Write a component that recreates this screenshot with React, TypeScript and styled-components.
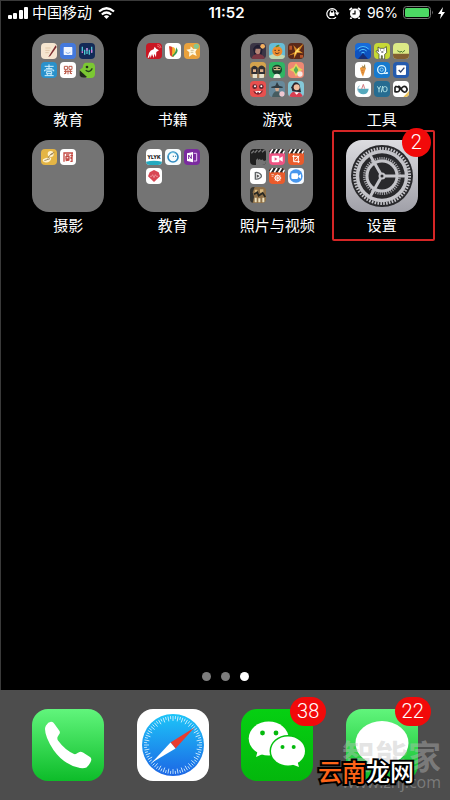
import React from "react";
import styled, { createGlobalStyle } from "styled-components";

const GlobalStyle = createGlobalStyle`
  * { box-sizing: border-box; }
  body {
    margin: 0;
    background: #000;
    color: #fff;
    font-family: Inter, "Noto Sans CJK SC", sans-serif;
  }
  button {
    border: 0;
    padding: 0;
    background: none;
    color: inherit;
    font: inherit;
    cursor: pointer;
  }
  svg { display: block; }
`;

const Screen = styled.div`
  position: relative;
  min-height: 100vh;
  display: flex;
  flex-direction: column;
  overflow: hidden;
  background: #000;
  box-shadow: inset 1px 1px 0 #3a3a3a;
`;

const StatusBar = styled.header`
  display: grid;
  grid-template-columns: 1fr auto 1fr;
  align-items: center;
  height: 25px;
  padding: 0 5px 0 8px;
`;

const StatusGroup = styled.div<{ $end?: boolean; $gap: number }>`
  display: flex;
  align-items: center;
  justify-content: ${(p) => (p.$end ? "flex-end" : "flex-start")};
  gap: ${(p) => p.$gap}px;
`;

const Carrier = styled.span`
  font-size: 15px;
  line-height: 24px;
  margin-right: 2px;
`;

const Clock = styled.time`
  font-size: 15px;
  font-weight: 600;
  line-height: 24px;
`;

const Percent = styled.span`
  font-size: 14px;
  line-height: 24px;
`;

const AppGrid = styled.main`
  flex: 1;
  display: grid;
  grid-template-columns: repeat(4, 1fr);
  grid-auto-rows: 106px;
  align-items: start;
  padding: 9px 16px 0;
`;

const AppButton = styled.button`
  position: relative;
  display: flex;
  flex-direction: column;
  align-items: center;
  justify-content: flex-start;
  width: 100%;
`;

const IconBox = styled.span`
  position: relative;
  display: block;
  width: 72px;
  height: 72px;
`;

const FolderBox = styled.span`
  display: grid;
  grid-template-columns: repeat(3, 16px);
  grid-auto-rows: 16px;
  align-content: start;
  gap: 3px;
  width: 72px;
  height: 72px;
  padding: 9px;
  border-radius: 17px;
  background: #747474;
`;

const MiniIcon = styled.svg`
  width: 16px;
  height: 16px;
  border-radius: 4px;
`;

const Label = styled.span`
  margin-top: 3px;
  font-size: 15px;
  line-height: 22px;
  white-space: nowrap;
`;

const Badge = styled.span`
  position: absolute;
  top: -12px;
  right: -13px;
  min-width: 29px;
  height: 29px;
  padding: 0 7px;
  border-radius: 15px;
  background: #f20a0a;
  font-family: Roboto, sans-serif;
  font-size: 20px;
  font-weight: 300;
  line-height: 29px;
  text-align: center;
`;

const Highlight = styled.span`
  position: absolute;
  inset: -10px -1px -4px 2px;
  border: 2px solid #d62626;
  border-radius: 2px;
  pointer-events: none;
`;

const Pager = styled.nav`
  display: flex;
  justify-content: center;
  gap: 10px;
  padding-bottom: 9px;
`;

const Dot = styled.button<{ $active?: boolean }>`
  width: 9px;
  height: 9px;
  border-radius: 50%;
  background: ${(p) => (p.$active ? "#fff" : "#7d7d7d")};
`;

const Dock = styled.footer`
  display: grid;
  grid-template-columns: repeat(4, 1fr);
  padding: 19px 16px;
  background: #4d4d4d;
`;

const SiteMark = styled.div`
  position: absolute;
  right: 9px;
  bottom: 9px;
  color: rgba(190, 190, 190, 0.42);
  text-align: center;
  pointer-events: none;
`;

const SiteName = styled.div`
  font-size: 33px;
  font-weight: 700;
  line-height: 32px;
`;

const SiteUrl = styled.div`
  font-family: "Open Sans", sans-serif;
  font-size: 16px;
  line-height: 18px;
`;

const Caption = styled.div`
  position: absolute;
  right: 36px;
  bottom: 9px;
  font-size: 24px;
  font-weight: 500;
  line-height: 36px;
  color: #fff;
  -webkit-text-stroke: 4px #000;
  paint-order: stroke fill;
  pointer-events: none;
`;

const CaptionAccent = styled.span`
  color: #ff6418;
`;

const minis: Record<string, React.ReactNode> = {
  pen: (
    <>
      <rect width="48" height="48" fill="#f6e6d0" />
      <path d="M13 15h16M13 22h13M13 29h10" stroke="#e0c8a8" strokeWidth="3" />
      <path d="M44 7 25 37l-3 5 6-3L47 12z" fill="#7c2d30" />
    </>
  ),
  note: (
    <>
      <rect width="48" height="48" fill="#4378dc" />
      <rect x="11" y="12" width="26" height="24" rx="2" fill="#eef4ff" />
      <path d="M17 28q7 7 14 0" fill="none" stroke="#88aef0" strokeWidth="3" />
    </>
  ),
  wave: (
    <>
      <rect width="48" height="48" fill="#132a57" />
      <path d="M10 11v14M17 20v15M24 15v18M31 20v15M38 11v18" stroke="#4ec7d3" strokeWidth="4" />
      <path d="M10 25v5M24 15v8M38 20v9" stroke="#da75d6" strokeWidth="4" />
    </>
  ),
  yi: (
    <>
      <rect width="48" height="48" fill="#2a91cb" />
      <path d="M11 13h27M24 7v13M15 20h19M11 28v-4h27v4M17 29h15v6H17zM18 36l2 4M31 36l-2 4M11 41h27" fill="none" stroke="#d4f2ff" strokeWidth="3" />
    </>
  ),
  grid: (
    <>
      <rect width="48" height="48" fill="#fff" />
      <path d="M13 13h10v9H13zM27 13h9v9h-9zM12 28h25M17 23v13M31 23v13M24 25v12M12 36l7-5M36 36l-6-5" fill="none" stroke="#ba5746" strokeWidth="3" />
    </>
  ),
  frog: (
    <>
      <path d="M20 2h17q11 0 11 12v24q0 10-10 10H23L3 32q-5-10 8-15 1-13 9-15z" fill="#7bc832" />
      <path d="M2 25 24 45q-15 5-22-4z" fill="#20291d" />
      <circle cx="24" cy="15" r="4" fill="#202c18" />
      <path d="M20 25q12 9 20-6" fill="none" stroke="#23411b" strokeWidth="4" />
    </>
  ),
  wolf: (
    <>
      <rect width="48" height="48" fill="#c91723" />
      <path d="M5 44 9 30q4-9 14-11l3-8 5 6 8 5-8 5-1 16-5-11-2 13-5-12-4 12-2-9-3 8z" fill="#fff" />
      <path d="M33 9q7 0 8 7M34 4q10 0 11 11" fill="none" stroke="#ff9293" strokeWidth="2" />
    </>
  ),
  leaf: (
    <>
      <rect width="48" height="48" fill="#fff" />
      <path d="M12 10q18-5 14 31-8 2-11-5z" fill="#df432e" />
      <path d="M22 11q16 4 5 29-7 3-6-5z" fill="#f2b62e" />
      <path d="M33 13q13 14-10 29l-1-5q12-9 11-24z" fill="#379b50" />
    </>
  ),
  star: (
    <>
      <rect width="48" height="48" fill="#e9a23d" />
      <path d="m20 10 8 8 12-2-6 11 4 12-12-5-11 7 1-13-9-8 12-2z" fill="#fff8df" />
      <circle cx="37" cy="10" r="8" fill="#87c68f" />
      <path d="M20 22h9M20 28h8" stroke="#b6a16e" strokeWidth="2" />
    </>
  ),
  hero: (
    <>
      <rect width="48" height="48" fill="#3b3545" />
      <path d="M9 18Q22-7 38 17l-4 20H14z" fill="#211d31" />
      <path d="M17 17h15l-2 14-7 5-8-8z" fill="#b48475" />
      <path d="M4 48q4-15 20-15t22 15z" fill="#7a3843" />
      <circle cx="38" cy="10" r="7" fill="#f5b05e" />
    </>
  ),
  orange: (
    <>
      <rect width="48" height="48" fill="#65bdd8" />
      <path d="M0 38q20-11 48 0v10H0z" fill="#c5d9af" />
      <circle cx="25" cy="25" r="15" fill="#ee8d2e" />
      <path d="M19 12q5-8 13-6-2 8-13 6" fill="#56862f" />
      <path d="M16 22h5M27 22h5M18 29q6 7 13 0" stroke="#613b25" strokeWidth="3" fill="none" />
    </>
  ),
  fire: (
    <>
      <rect width="48" height="48" fill="#5c2919" />
      <path d="m0 38 22-12L16 6l11 12L48 1 34 23l12 8-18-2-11 19 2-15z" fill="#d98a25" />
      <path d="m22 25 12-12-3 11 8 3-13 1-8 13z" fill="#ffe069" />
      <path d="M4 8h8v12H4zM36 36h9v8h-9z" fill="#b7542a" />
    </>
  ),
  crew: (
    <>
      <rect width="48" height="48" fill="#9d7951" />
      <path d="M0 0h48v17H0z" fill="#d4a34d" />
      <path d="M4 17q9-12 19 0v19H4zM25 17q9-13 20 0v19H25z" fill="#302e32" />
      <path d="M9 22h9v8H9zM30 22h10v8H30z" fill="#dfb18b" />
      <path d="M8 48V36h13v12M28 48V36h14v12" fill="#e8e2ce" />
    </>
  ),
  ninja: (
    <>
      <rect width="48" height="48" fill="#2fb563" />
      <circle cx="24" cy="23" r="15" fill="#193f2b" />
      <path d="M12 17q12-7 24 0l-3 8H15z" fill="#e0bb8c" />
      <path d="M14 19h8M26 19h8" stroke="#17271e" strokeWidth="4" />
      <path d="M13 48q1-13 11-13t11 13z" fill="#e8eee1" />
    </>
  ),
  gem: (
    <>
      <rect width="48" height="48" fill="#ed8873" />
      <path d="m24 4 8 12 12 7-12 7-8 14-7-14-13-7 13-7z" fill="#e4d65c" />
      <path d="m24 12 7 12-7 12-7-12z" fill="#55af58" />
      <circle cx="36" cy="36" r="8" fill="#f7e8e3" />
    </>
  ),
  monster: (
    <>
      <rect width="48" height="48" fill="#e8504e" />
      <circle cx="14" cy="17" r="7" fill="#5c2730" />
      <circle cx="34" cy="17" r="7" fill="#5c2730" />
      <circle cx="15" cy="16" r="3" fill="#fff" />
      <circle cx="34" cy="16" r="3" fill="#fff" />
      <path d="M10 29q14 8 29-1-4 13-15 13Q12 40 10 29" fill="#7d2430" />
      <path d="m15 31 5 6 4-5 5 5 5-7z" fill="#fff" />
    </>
  ),
  wizard: (
    <>
      <rect width="48" height="48" fill="#68899b" />
      <path d="m7 17 12-3 5-11 6 11 11 3v4H7z" fill="#303b42" />
      <path d="M18 21h13l-3 12h-7z" fill="#d5aa8e" />
      <path d="M9 48q3-17 15-17t15 17z" fill="#465c60" />
      <circle cx="39" cy="39" r="8" fill="#f0c8d1" />
    </>
  ),
  girl: (
    <>
      <rect width="48" height="48" fill="#84c8d8" />
      <path d="M10 19Q20-7 35 11l4 23-26-3z" fill="#2b242c" />
      <circle cx="26" cy="19" r="9" fill="#f0bd9f" />
      <path d="M3 48q8-21 23-14 15-1 19 14z" fill="#d93e50" />
      <path d="m19 34 7 7 7-7" fill="#fff" />
    </>
  ),
  signal: (
    <>
      <rect width="48" height="48" fill="#176bda" />
      <path d="M0 25 24 8l24 17v23H0z" fill="#0e52bf" />
      <path d="M7 18q17-15 34 0M13 24q11-10 22 0M19 30q5-5 10 0" fill="none" stroke="#52c5ff" strokeWidth="3" />
      <path d="m9 48 15-17 15 17z" fill="#172d75" />
    </>
  ),
  bear: (
    <>
      <rect width="48" height="48" fill="#c7d936" />
      <path d="m12 12 6 4h12l7-5 1 18-6 5v14h-7V38h-3v10h-7V34l-9-9 4-3 3 4z" fill="#fff" stroke="#252e22" strokeWidth="2" />
      <path d="M19 21h2M29 21h2M22 27h6" stroke="#222" strokeWidth="3" />
    </>
  ),
  grass: (
    <>
      <rect width="48" height="48" fill="#dcea86" />
      <path d="M0 32h48v16H0z" fill="#825f31" />
      <path d="m13 23 9 5 2-4 4 4 8-6" fill="none" stroke="#4d7a2e" strokeWidth="3" />
    </>
  ),
  carrot: (
    <>
      <rect width="48" height="48" fill="#fff" />
      <path d="M15 18q9-9 18 0l-9 26q-6-8-9-26" fill="#e99840" />
      <path d="m23 18-3-10 5 6 5-8 1 11" fill="#9f854c" />
      <path d="M19 26h6M21 32h5" stroke="#c46d28" strokeWidth="2" />
    </>
  ),
  search: (
    <>
      <rect width="48" height="48" fill="#1679cd" />
      <circle cx="23" cy="23" r="12" fill="none" stroke="#d8f5ff" strokeWidth="4" />
      <circle cx="23" cy="23" r="5" fill="none" stroke="#8fd2f5" strokeWidth="3" />
      <path d="M29 34h9" stroke="#d8f5ff" strokeWidth="4" />
      <circle cx="39" cy="33" r="3" fill="#fff" />
    </>
  ),
  check: (
    <>
      <rect width="48" height="48" fill="#255bae" />
      <rect x="10" y="10" width="29" height="29" rx="3" fill="#fff" />
      <path d="m17 24 6 6 11-13" fill="none" stroke="#30436d" strokeWidth="4" />
    </>
  ),
  bowl: (
    <>
      <rect width="48" height="48" fill="#fff" />
      <path d="M8 23h33q-2 17-16 17T8 23" fill="#55a9bd" />
      <path d="m20 24 5-14 4 13" fill="none" stroke="#d37b82" strokeWidth="3" />
      <path d="M13 14q-10 12 1 22" fill="none" stroke="#89b8ca" strokeWidth="3" />
    </>
  ),
  yo: (
    <>
      <rect width="48" height="48" fill="#266c91" />
      <path d="m10 16 5 8 5-9M15 24v10M26 15l-4 19" fill="none" stroke="#b2e4e7" strokeWidth="3" />
      <rect x="27" y="17" width="12" height="15" rx="5" fill="none" stroke="#b2e4e7" strokeWidth="3" />
    </>
  ),
  loop: (
    <>
      <rect width="48" height="48" fill="#fff" />
      <path d="M48 30v18H31z" fill="#edc45a" />
      <path d="M6 17v15q14 3 14-7T6 17M24 24q8-12 15-6 7 7 0 14-7 5-15-8t-6-6" fill="none" stroke="#202020" strokeWidth="5" />
    </>
  ),
  swan: (
    <>
      <rect width="48" height="48" fill="#e4b545" />
      <circle cx="29" cy="15" r="9" fill="#fff3cf" />
      <path d="M6 31q11-8 25-5-2 16-20 14-8-3-5-9" fill="#fff3cf" />
      <path d="M20 28Q29 12 40 10M10 35l17-6M29 17l7-3" fill="none" stroke="#775d34" strokeWidth="2" />
    </>
  ),
  kitchen: (
    <>
      <rect width="48" height="48" fill="#fff" />
      <path d="M12 38V12h27M18 18h10M18 23h9v7h-9zM17 35l11-2M31 20h8M36 14v23h-5M32 25l2 5" fill="none" stroke="#c34a43" strokeWidth="4" />
    </>
  ),
  ylyk: (
    <>
      <rect width="48" height="48" fill="#fff" />
      <text x="24" y="29" textAnchor="middle" fontFamily="Inter" fontWeight="800" fontSize="15" fill="#111">YLYK</text>
      <path d="M0 38q24-6 48 0v10H0z" fill="#24a9bf" />
    </>
  ),
  ring: (
    <>
      <rect width="48" height="48" fill="#f7fbfc" />
      <circle cx="24" cy="24" r="15" fill="none" stroke="#328bc0" strokeWidth="5" />
      <path d="M11 19q7-13 21-6" fill="none" stroke="#82cde4" strokeWidth="3" />
      <path d="M25 20v4M32 20v4" stroke="#277ba9" strokeWidth="3" />
    </>
  ),
  onenote: (
    <>
      <rect width="48" height="48" fill="#7b2b9f" />
      <path d="m9 13 18-4v31L9 36z" fill="#fff" />
      <path d="M29 13h9v23h-9" fill="none" stroke="#e9c8f6" strokeWidth="3" />
      <path d="M14 30V18l8 11V17" fill="none" stroke="#7b2b9f" strokeWidth="3" />
    </>
  ),
  redgem: (
    <>
      <rect width="48" height="48" fill="#fff" />
      <path d="m24 6 14 7 4 12-18 17L6 25l5-12z" fill="#d84754" />
      <path d="M12 25h5l3-5 4 9 4-9 3 5h5" fill="none" stroke="#f5a8ad" strokeWidth="2" />
    </>
  ),
  clapdark: (
    <>
      <rect width="48" height="48" fill="#202020" />
      <path d="m4 13 8-8M14 11l8-8M25 10l8-8M36 10l8-8" stroke="#777" strokeWidth="4" />
      <path d="M18 48V34l4-6 4 5 3-4 4 5 4-3 5 5 6-2v14z" fill="#747474" />
    </>
  ),
  clappink: (
    <>
      <rect width="48" height="48" fill="#ee5383" />
      <path d="M0 0h48v13H0z" fill="#222" />
      <path d="m3 13 8-13M16 13l8-13M29 13l8-13M42 13l8-13" stroke="#fff" strokeWidth="5" />
      <rect x="8" y="20" width="23" height="20" rx="4" fill="#fff" />
      <path d="m31 28 10-6v16l-10-6z" fill="#fff" />
      <path d="m17 25 8 5-8 5z" fill="#ee5383" />
    </>
  ),
  clapcrop: (
    <>
      <rect width="48" height="48" fill="#e95b2c" />
      <path d="M0 0h48v13H0z" fill="#222" />
      <path d="m3 13 8-13M16 13l8-13M29 13l8-13M42 13l8-13" stroke="#fff" strokeWidth="5" />
      <path d="M17 18v20h18M13 22h18v20M20 35l14-15" fill="none" stroke="#fff" strokeWidth="3" />
    </>
  ),
  play: (
    <>
      <rect width="48" height="48" fill="#fff" />
      <path d="M16 14q8-2 15 4 7 7-1 12-7 5-14 3z" fill="none" stroke="#626668" strokeWidth="4" />
      <path d="m20 19 9 5-9 6z" fill="#555" />
    </>
  ),
  clapflower: (
    <>
      <rect width="48" height="48" fill="#e95b2c" />
      <path d="M0 0h48v13H0z" fill="#222" />
      <path d="m3 13 8-13M16 13l8-13M29 13l8-13M42 13l8-13" stroke="#fff" strokeWidth="5" />
      <circle cx="26" cy="30" r="8" fill="none" stroke="#fff" strokeWidth="3" />
      <path d="M26 19v22M15 30h22M18 22l16 16M34 22 18 38M7 20h8M8 25h5" stroke="#fff" strokeWidth="2" />
    </>
  ),
  camera: (
    <>
      <rect width="48" height="48" fill="#f6faff" />
      <circle cx="24" cy="24" r="20" fill="#4796ed" />
      <rect x="10" y="16" width="20" height="17" rx="4" fill="#fff" />
      <path d="m31 23 8-5v14l-8-5z" fill="#fff" />
    </>
  ),
  warriors: (
    <>
      <rect width="48" height="48" fill="#8e7048" />
      <path d="M0 0h14L8 16l4 14-4 18H0z" fill="#343532" />
      <path d="M14 8h8v10h-8zM30 7h10v10H30z" fill="#d7b87e" />
      <path d="M12 22 22 16l4 10 12-8 8 12" fill="none" stroke="#282822" strokeWidth="5" />
      <path d="M14 32h6v14h-6zM25 34h6v12h-6zM37 32h6v14h-6z" fill="#eee2bd" />
    </>
  ),
};

const SettingsIcon = () => (
  <svg width="72" height="72" viewBox="0 0 72 72" aria-hidden="true">
    <defs>
      <linearGradient id="settingsBg" x1="0" y1="0" x2="0" y2="1">
        <stop offset="0" stopColor="#dcdce0" />
        <stop offset="1" stopColor="#a0a0a8" />
      </linearGradient>
    </defs>
    <rect width="72" height="72" rx="16" fill="url(#settingsBg)" />
    <circle cx="36" cy="36" r="31" fill="#29292c" />
    <circle cx="36" cy="36" r="27.5" fill="none" stroke="#c4c4c9" strokeWidth="3" strokeDasharray="1.6 1.28" />
    <circle cx="36" cy="36" r="24.5" fill="none" stroke="#c4c4c9" strokeWidth="3.5" />
    <circle cx="36" cy="36" r="17.5" fill="none" stroke="#a4a4a9" strokeWidth="3" strokeDasharray="1.1 1.1" />
    <circle cx="36" cy="36" r="15" fill="none" stroke="#c4c4c9" strokeWidth="3" />
    <g fill="none" stroke="#c4c4c9" strokeWidth="3">
      <path d="M39 36h20" />
      <path d="M39 36h20" transform="rotate(120 36 36)" />
      <path d="M39 36h20" transform="rotate(240 36 36)" />
    </g>
    <circle cx="36" cy="36" r="3.5" fill="#c4c4c9" />
    <circle cx="36" cy="36" r="1.5" fill="#29292c" />
  </svg>
);

const GreenDefs = ({ id }: { id: string }) => (
  <defs>
    <linearGradient id={id} x1="0" y1="0" x2="0" y2="1">
      <stop offset="0" stopColor="#61f57c" />
      <stop offset="1" stopColor="#0dbc29" />
    </linearGradient>
  </defs>
);

const PhoneIcon = () => (
  <svg width="72" height="72" viewBox="0 0 72 72" aria-hidden="true">
    <GreenDefs id="phoneBg" />
    <rect width="72" height="72" rx="16" fill="url(#phoneBg)" />
    <path
      d="M14 16.5Q16 13 19 12.7Q21 12.5 22.5 15L27.5 22Q28.5 24 27 25.5L25.5 28Q25 30 26 31.5Q33 41 42 45Q44 45.5 45.500 44L47.500 43Q49 42.500 51 43.500L58 48Q60 49.500 59 52Q57.500 56 54.500 58.500Q52 59.500 48 59Q32 56 21.500 41Q13 28 13 20Q13 18 14 16.500Z"
      fill="#fff"
    />
  </svg>
);

const SafariIcon = () => (
  <svg width="72" height="72" viewBox="0 0 72 72" aria-hidden="true">
    <defs>
      <linearGradient id="safariBg" x1="0" y1="0" x2="0" y2="1">
        <stop offset="0" stopColor="#1dc5f8" />
        <stop offset="1" stopColor="#1c66e5" />
      </linearGradient>
    </defs>
    <rect width="72" height="72" rx="16" fill="#fff" />
    <circle cx="36" cy="36" r="31" fill="url(#safariBg)" />
    <g stroke="#d8f2ff" strokeWidth="0.8">
      {Array.from({ length: 72 }, (_, i) => (
        <path key={i} d={i % 2 ? "M36 7v3" : "M36 7v5"} transform={`rotate(${i * 5} 36 36)`} />
      ))}
    </g>
    <path d="M57.5 18.5 38.5 39.5 33.5 33.5z" fill="#e83c30" />
    <path d="M15 53.5 33.5 33.5 38.5 39.5z" fill="#fff" />
  </svg>
);

const WeChatIcon = () => (
  <svg width="72" height="72" viewBox="0 0 72 72" aria-hidden="true">
    <defs>
      <linearGradient id="wechatBg" x1="0" y1="0" x2="0" y2="1">
        <stop offset="0" stopColor="#06d012" />
        <stop offset="1" stopColor="#03b70c" />
      </linearGradient>
    </defs>
    <rect width="72" height="72" rx="16" fill="url(#wechatBg)" />
    <ellipse cx="27.7" cy="29.5" rx="20" ry="17" fill="#fff" />
    <path d="m17 41-2 7 9-4z" fill="#fff" />
    <ellipse cx="47" cy="42" rx="18.5" ry="16" fill="#04c10f" />
    <ellipse cx="47" cy="42" rx="17" ry="14.5" fill="#fff" />
    <path d="m50 55 8 3-2-7z" fill="#fff" />
    <g fill="#04b90d">
      <circle cx="21.5" cy="24" r="2.4" />
      <circle cx="35" cy="24" r="2.4" />
      <circle cx="41.5" cy="38" r="2" />
      <circle cx="52.7" cy="38" r="2" />
    </g>
  </svg>
);

const MessagesIcon = () => (
  <svg width="72" height="72" viewBox="0 0 72 72" aria-hidden="true">
    <GreenDefs id="messagesBg" />
    <rect width="72" height="72" rx="16" fill="url(#messagesBg)" />
    <ellipse cx="36" cy="34" rx="26.5" ry="22" fill="#fff" />
    <path d="M22 50q0 6-6 9 9 0 15-5z" fill="#fff" />
  </svg>
);

const folders = [
  { name: "教育", apps: ["pen", "note", "wave", "yi", "grid", "frog"] },
  { name: "书籍", apps: ["wolf", "leaf", "star"] },
  { name: "游戏", apps: ["hero", "orange", "fire", "crew", "ninja", "gem", "monster", "wizard", "girl"] },
  { name: "工具", apps: ["signal", "bear", "grass", "carrot", "search", "check", "bowl", "yo", "loop"] },
  { name: "摄影", apps: ["swan", "kitchen"] },
  { name: "教育", apps: ["ylyk", "ring", "onenote", "redgem"] },
  { name: "照片与视频", apps: ["clapdark", "clappink", "clapcrop", "play", "clapflower", "camera", "warriors"] },
];

const dockApps = [
  { name: "电话", Icon: PhoneIcon },
  { name: "Safari", Icon: SafariIcon },
  { name: "微信", Icon: WeChatIcon, badge: 38 },
  { name: "信息", Icon: MessagesIcon, badge: 22 },
];

export default function App() {
  return (
    <>
      <GlobalStyle />
      <Screen>
        <StatusBar>
          <StatusGroup $gap={4}>
            <svg width="20" height="12" viewBox="0 0 20 12" fill="#fff" aria-hidden="true">
              <rect x="0" y="8" width="4" height="4" rx="1" />
              <rect x="5" y="6" width="4" height="6" rx="1" />
              <rect x="11" y="3" width="4" height="9" rx="1" />
              <rect x="16" y="0" width="4" height="12" rx="1" />
            </svg>
            <Carrier>中国移动</Carrier>
            <svg width="17" height="12" viewBox="0 0 17 12" fill="none" stroke="#fff" strokeWidth="2.2" aria-hidden="true">
              <path d="M1 4.5q7.5-6.5 15 0M3.8 7.5q4.7-4 9.4 0" />
              <path d="M8.5 12 5.8 9.3q2.7-2 5.4 0z" fill="#fff" stroke="none" />
            </svg>
          </StatusGroup>
          <Clock>11:52</Clock>
          <StatusGroup $end $gap={5}>
            <StatusGroup $gap={8}>
              <svg width="14" height="12" viewBox="0 0 14 12" fill="none" stroke="#fff" aria-hidden="true">
                <path d="M10 10.2A5.2 5.2 0 1 1 11.2 6" strokeWidth="1.2" />
                <path d="M8.8 5.5h4.6L11.2 8.5z" fill="#fff" stroke="none" />
                <rect x="3.5" y="5.5" width="5" height="3.5" fill="#fff" stroke="none" />
                <path d="M4.5 6V4.5a1.5 1.5 0 0 1 3 0V6" />
              </svg>
              <svg width="14" height="12" viewBox="0 0 14 12" aria-hidden="true">
                <circle cx="7" cy="6.5" r="5" fill="#fff" />
                <path d="M1.5 3 4 1M12.5 3 10 1M3.5 10.5l-1 1.5M10.5 10.5l1 1.5" stroke="#fff" strokeWidth="1.8" />
                <path d="M7 3.5v3.3H4.5" fill="none" stroke="#000" strokeWidth="1.2" />
              </svg>
            </StatusGroup>
            <Percent>96%</Percent>
            <svg width="30" height="13" viewBox="0 0 30 13" aria-hidden="true">
              <rect x="0.5" y="0.5" width="27" height="12" rx="3" fill="none" stroke="#777" />
              <rect x="2" y="2" width="24" height="9" rx="1.5" fill="#4cd964" />
              <path d="M29 4.5q1.5 2 0 4z" fill="#777" />
            </svg>
            <svg width="7" height="12" viewBox="0 0 7 12" fill="#fff" aria-hidden="true">
              <path d="M5 0 0 7h3L2 12l5-7H4z" />
            </svg>
          </StatusGroup>
        </StatusBar>

        <AppGrid>
          {folders.map((folder, index) => (
            <AppButton key={index}>
              <FolderBox>
                {folder.apps.map((app) => (
                  <MiniIcon key={app} viewBox="0 0 48 48" aria-hidden="true">
                    {minis[app]}
                  </MiniIcon>
                ))}
              </FolderBox>
              <Label>{folder.name}</Label>
            </AppButton>
          ))}
          <AppButton>
            <Highlight />
            <IconBox>
              <SettingsIcon />
              <Badge>2</Badge>
            </IconBox>
            <Label>设置</Label>
          </AppButton>
        </AppGrid>

        <Pager aria-label="主屏幕页面">
          <Dot aria-label="1" />
          <Dot aria-label="2" />
          <Dot aria-label="3" $active aria-current="page" />
        </Pager>

        <Dock>
          {dockApps.map(({ name, Icon, badge }) => (
            <AppButton key={name} aria-label={name}>
              <IconBox>
                <Icon />
                {badge && <Badge>{badge}</Badge>}
              </IconBox>
            </AppButton>
          ))}
        </Dock>

        <SiteMark>
          <SiteName>智能家</SiteName>
          <SiteUrl>www.znj.com</SiteUrl>
        </SiteMark>
        <Caption>
          <CaptionAccent>云南</CaptionAccent>龙网
        </Caption>
      </Screen>
    </>
  );
}
